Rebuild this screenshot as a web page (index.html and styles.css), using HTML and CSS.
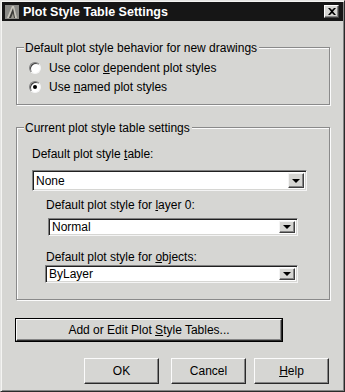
FILE: index.html
```html
<!DOCTYPE html>
<html>
<head>
<meta charset="utf-8">
<link rel="stylesheet" href="styles.css">
</head>
<body>
<div class="window">
  <div class="titlebar">
    <svg class="app-icon" width="14" height="14" viewBox="0 0 14 14">
      <rect x="0" y="0" width="14" height="14" fill="#8a8a86"/>
      <polygon points="2,13 7,1 9,1 12,13" fill="#c8c6bc"/>
      <polygon points="4,13 8,3 10,13" fill="#3a3a38"/>
      <polygon points="6,13 8,8 9,13" fill="#9c9a90"/>
    </svg>
    <span class="title">Plot Style Table Settings</span>
    <span class="close"><svg width="8" height="7" viewBox="0 0 8 7"><path d="M0 0h2l2 2 2-2h2L5 3.5 8 7H6L4 5 2 7H0l3-3.5z" fill="#000"/></svg></span>
  </div>
  <div class="content">
    <div class="group group1">
      <div class="legend">Default plot style behavior for new drawings</div>
      <div class="radio-row first"><span class="radio"></span><span>Use color <u>d</u>ependent plot styles</span></div>
      <div class="radio-row"><span class="radio checked"><span class="dot"></span></span><span>Use <u>n</u>amed plot styles</span></div>
    </div>
    <div class="group group2">
      <div class="legend">Current plot style table settings</div>
      <div class="label label1">Default plot style <u>t</u>able:</div>
      <div class="combo combo1"><span class="value">None</span><span class="drop"><span class="tri"></span></span></div>
      <div class="label label2">Default plot style for <u>l</u>ayer 0:</div>
      <div class="combo combo2"><span class="value">Normal</span><span class="drop"><span class="tri"></span></span></div>
      <div class="label label3">Default plot style for <u>o</u>bjects:</div>
      <div class="combo combo3"><span class="value">ByLayer</span><span class="drop"><span class="tri"></span></span></div>
    </div>
    <div class="btn btn-default add-btn"><span class="btn-inner"><span>Add or Edit Plot <u>S</u>tyle Tables...</span></span></div>
    <div class="btn-row">
      <div class="btn ok"><span>OK</span></div>
      <div class="btn cancel"><span>Cancel</span></div>
      <div class="btn help"><span><u>H</u>elp</span></div>
    </div>
  </div>
</div>
</body>
</html>
```

FILE: styles.css
```css
html, body {
  margin: 0;
  padding: 0;
  background: #d6d6d3;
}
body {
  font-family: "Liberation Sans", Arial, sans-serif;
  font-size: 12px;
  color: #000;
}
.window {
  width: 345px;
  height: 392px;
  box-sizing: border-box;
  background: #d6d6d3;
  border: 1px solid;
  border-color: #e4e4e2 #2a2a2a #2a2a2a #e4e4e2;
  box-shadow: inset 1px 1px 0 #f4f4f2, inset -1px -1px 0 #858585;
  padding: 1px;
}
.titlebar {
  height: 19px;
  background: #161616;
  display: flex;
  align-items: center;
  padding: 0 4px 0 3px;
}
.app-icon {
  flex: none;
}
.title {
  color: #fff;
  font-weight: bold;
  font-size: 12.5px;
  margin-left: 4px;
  flex: 1;
}
.close {
  width: 15px;
  height: 13px;
  box-sizing: border-box;
  background: #d6d6d3;
  border: 1px solid;
  border-color: #fff #404040 #404040 #fff;
  box-shadow: inset -1px -1px 0 #858585;
  display: flex;
  align-items: center;
  justify-content: center;
}
.content {
  padding: 0 13px 0 14px;
}
.group {
  border: 1px solid #8a8a8a;
  box-shadow: 1px 1px 0 #fbfbfb, inset 1px 1px 0 #fbfbfb;
}
.legend {
  width: fit-content;
  background: #d6d6d3;
  line-height: 14px;
  height: 14px;
  margin: -7px 0 0 7px;
  padding: 0 2px 0 1px;
}
.group1 {
  margin-top: 26px;
  padding-bottom: 8px;
}
.radio-row {
  display: flex;
  align-items: center;
  height: 19px;
  padding-left: 12px;
}
.radio-row.first {
  margin-top: 3px;
}
.radio {
  width: 12px;
  height: 12px;
  box-sizing: border-box;
  border-radius: 50%;
  border: 1px solid;
  border-color: #808080 #f4f4f4 #f4f4f4 #808080;
  box-shadow: inset 1px 1px 0 #404040;
  background: #fff;
  margin-right: 8px;
  display: flex;
  align-items: center;
  justify-content: center;
}
.dot {
  width: 4px;
  height: 4px;
  border-radius: 50%;
  background: #000;
}
.group2 {
  margin-top: 22px;
  padding-bottom: 16px;
}
.label {
  line-height: 14px;
  height: 14px;
}
.label1 {
  margin: 12px 0 0 15px;
}
.label2 {
  margin: 7px 0 0 29px;
}
.label3 {
  margin: 14px 0 0 29px;
}
.combo {
  box-sizing: border-box;
  background: #fff;
  border: 1px solid;
  border-color: #808080 #f4f4f4 #f4f4f4 #808080;
  box-shadow: inset 1px 1px 0 #202020, inset -1px -1px 0 #d6d6d3;
  display: flex;
  align-items: center;
  padding: 2px 2px 2px 3px;
}
.combo .value {
  flex: 1;
}
.combo1 {
  height: 21px;
  margin: 9px 22px 0 15px;
}
.combo2 {
  height: 18px;
  margin: 6px 31px 0 31px;
}
.combo3 {
  height: 18px;
  margin: 1px 31px 0 28px;
}
.drop {
  width: 16px;
  align-self: stretch;
  box-sizing: border-box;
  background: #d6d6d3;
  border: 1px solid;
  border-color: #f4f4f4 #404040 #404040 #f4f4f4;
  box-shadow: inset -1px -1px 0 #858585;
  display: flex;
  align-items: center;
  justify-content: center;
}
.tri {
  width: 0;
  height: 0;
  border-left: 4px solid transparent;
  border-right: 4px solid transparent;
  border-top: 4px solid #000;
}
.btn {
  box-sizing: border-box;
  background: #d6d6d3;
  border: 1px solid;
  border-color: #fbfbfb #2a2a2a #2a2a2a #fbfbfb;
  box-shadow: inset -1px -1px 0 #858585;
  display: flex;
  align-items: center;
  justify-content: center;
}
.btn-default {
  border: 1px solid #000;
  box-shadow: none;
}
.btn-inner {
  flex: 1;
  align-self: stretch;
  display: flex;
  align-items: center;
  justify-content: center;
  border: 1px solid;
  border-color: #fbfbfb #2a2a2a #2a2a2a #fbfbfb;
  box-shadow: inset -1px -1px 0 #858585;
}
.add-btn {
  width: 268px;
  height: 24px;
  margin: 18px 0 0 -1px;
}
.btn-row {
  display: flex;
  margin-top: 16px;
}
.btn-row .btn {
  height: 26px;
  width: 75px;
}
.ok {
  margin-left: 68px;
}
.cancel {
  margin-left: 12px;
}
.help {
  margin-left: 8px;
}
```
